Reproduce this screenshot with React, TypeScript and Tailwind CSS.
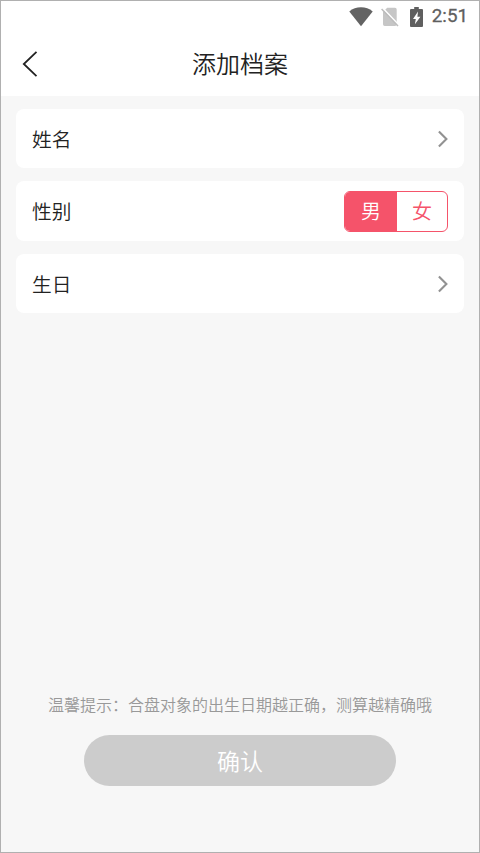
import React, { useState } from 'react';

type Gender = 'male' | 'female';

const StatusBar: React.FC = () => (
  <div className="flex h-[31px] items-center justify-end pr-[11px] text-[#5f5f5f]">
    {/* Wifi */}
    <svg width="24" height="20" viewBox="0 0 24 20" fill="#636363" className="mr-2">
      <path d="M0.3 4.4C3.6 1.7 7.6 0.3 12 0.3s8.4 1.4 11.7 4.1L12 19.2z" />
    </svg>
    {/* No sim */}
    <svg width="18" height="20" viewBox="0 0 18 20" className="mr-[11px]">
      <path d="M6.2 0.8H14a1.7 1.7 0 0 1 1.7 1.7v14.7a1.7 1.7 0 0 1-1.7 1.7H3.7A1.7 1.7 0 0 1 2 17.2V5z" fill="#c6c6c6" />
      <path d="M1.4 0.8l16 16.8" stroke="#fff" strokeWidth="1.8" />
      <path d="M0.6 1.9l16.4 17.2" stroke="#bcbcbc" strokeWidth="1.5" />
    </svg>
    {/* Battery charging */}
    <svg width="13" height="20" viewBox="0 0 13 20" className="mr-[9px]">
      <path d="M4.2 0h4.6v2H12a1 1 0 0 1 1 1v16a1 1 0 0 1-1 1H1a1 1 0 0 1-1-1V3a1 1 0 0 1 1-1h3.2z" fill="#5f5f5f" />
      <path d="M8 4.6L3 11.9h2.8L4.9 17.2L10.4 9.8H7.4z" fill="#fff" />
    </svg>
    <span className="font-[Roboto,sans-serif] text-[18.8px] leading-none font-normal [-webkit-text-stroke:0.3px_#5f5f5f]">2:51</span>
  </div>
);

const Arrow: React.FC = () => (
  <svg width="10" height="18" viewBox="0 0 10 18" fill="none" stroke="#929292" strokeWidth="2.1">
    <path d="M0.9 1.5L8.4 9L0.9 16.5" />
  </svg>
);

interface RowProps {
  label: string;
  children: React.ReactNode;
}

const Row: React.FC<RowProps> = ({ label, children }) => (
  <div className="flex h-[59.3px] items-center justify-between rounded-lg bg-white px-4">
    <span className="text-[19.7px] leading-none text-[#222]">{label}</span>
    {children}
  </div>
);

export default function App() {
  const [gender, setGender] = useState<Gender>('male');

  return (
    <div className="flex h-[853px] w-[480px] flex-col border border-[#b0b0b0] bg-[#f7f7f7] font-['Noto_Sans_CJK_SC',sans-serif] font-[350]">
      <header className="h-[95px] shrink-0 bg-white">
        <StatusBar />
        <div className="grid h-16 grid-cols-[1fr_auto_1fr] items-center">
          <button className="ml-[21px] w-4" aria-label="返回">
            <svg width="16" height="28" viewBox="0 0 16 28" fill="none" stroke="#222" strokeWidth="1.8">
              <path d="M14.5 1.8L1.8 14L14.5 26.2" />
            </svg>
          </button>
          <h1 className="pb-0.5 text-[24px] leading-none text-[#222]">添加档案</h1>
        </div>
      </header>

      <main className="flex flex-col gap-[13.2px] px-[15px] pt-[13px]">
        <Row label="姓名">
          <Arrow />
        </Row>
        <Row label="性别">
          <div className="flex h-[41px] w-[104px] overflow-hidden rounded-md border border-[#f5536a] text-[20px] leading-none">
            <button
              onClick={() => setGender('male')}
              className={`w-[52px] ${gender === 'male' ? 'bg-[#f5536a] text-white' : 'text-[#f5536a]'}`}
            >
              男
            </button>
            <button
              onClick={() => setGender('female')}
              className={`flex-1 ${gender === 'female' ? 'bg-[#f5536a] text-white' : 'text-[#f5536a]'}`}
            >
              女
            </button>
          </div>
        </Row>
        <Row label="生日">
          <Arrow />
        </Row>
      </main>

      <footer className="mt-auto flex flex-col items-center pb-[66px]">
        <p className="mb-[23px] text-[16px] leading-none text-[#999]">
          温馨提示：合盘对象的出生日期越正确，测算越精确哦
        </p>
        <button className="h-[51px] w-[312px] rounded-full bg-[#ccc] text-[23px] leading-none text-white">
          确认
        </button>
      </footer>
    </div>
  );
}
